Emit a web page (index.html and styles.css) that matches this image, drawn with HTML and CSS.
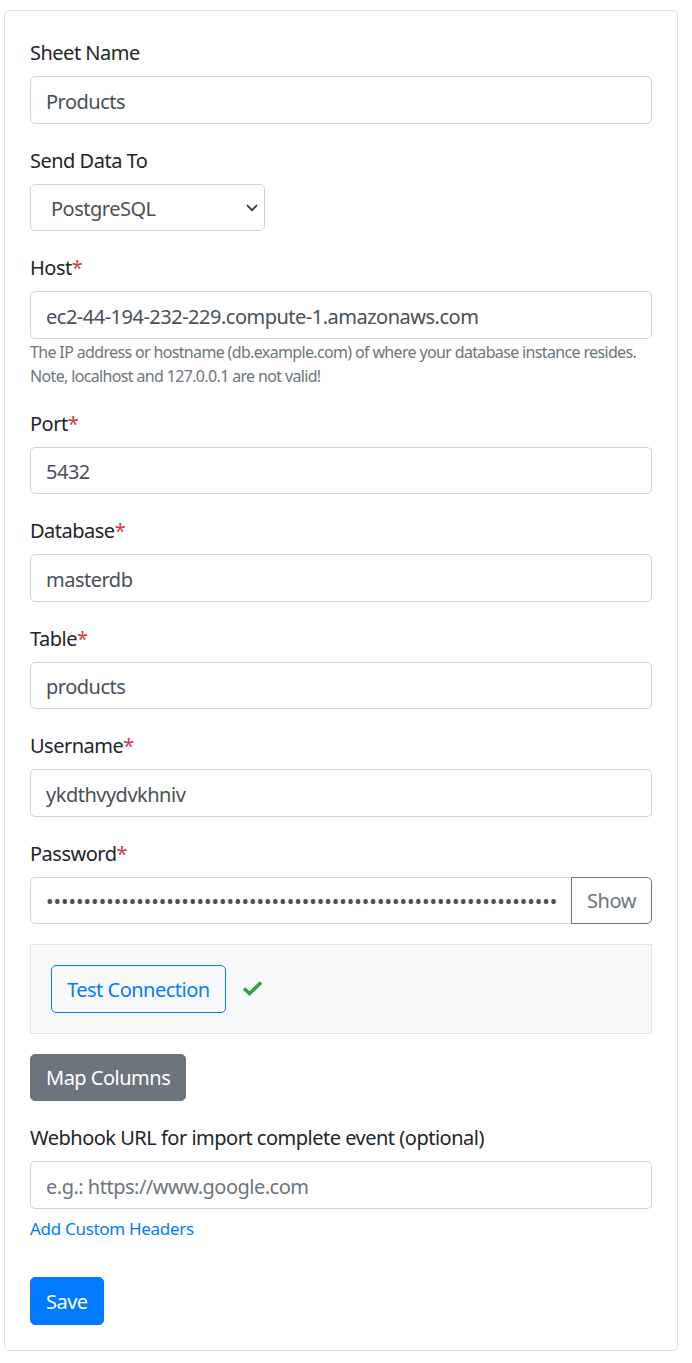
FILE: index.html
```html
<!DOCTYPE html>
<html lang="en">
<head>
<meta charset="utf-8">
<title>Sheet settings</title>
<link rel="stylesheet" href="styles.css">
</head>
<body>
<div class="card">
  <form class="card-body">
    <div class="form-group">
      <label class="label">Sheet Name</label>
      <input class="form-control" type="text" value="Products">
    </div>
    <div class="form-group">
      <label class="label">Send Data To</label>
      <div class="select-wrap">
        <select class="form-select">
          <option>PostgreSQL</option>
        </select>
        <svg class="chevron" width="12" height="8" viewBox="0 0 12 8"><path d="M1 1.2 L6 6.2 L11 1.2" fill="none" stroke="#343a40" stroke-width="1.8"/></svg>
      </div>
    </div>
    <div class="form-group">
      <label class="label">Host<span class="req">*</span></label>
      <input class="form-control" type="text" value="ec2-44-194-232-229.compute-1.amazonaws.com">
      <div class="help">The IP address or hostname (db.example.com) of where your database instance resides. Note, localhost and 127.0.0.1 are not valid!</div>
    </div>
    <div class="form-group">
      <label class="label">Port<span class="req">*</span></label>
      <input class="form-control" type="text" value="5432">
    </div>
    <div class="form-group">
      <label class="label">Database<span class="req">*</span></label>
      <input class="form-control" type="text" value="masterdb">
    </div>
    <div class="form-group">
      <label class="label">Table<span class="req">*</span></label>
      <input class="form-control" type="text" value="products">
    </div>
    <div class="form-group">
      <label class="label">Username<span class="req">*</span></label>
      <input class="form-control" type="text" value="ykdthvydvkhniv">
    </div>
    <div class="form-group">
      <label class="label">Password<span class="req">*</span></label>
      <div class="input-group">
        <input class="form-control grouped" type="password" value="aaaaaaaaaaaaaaaaaaaaaaaaaaaaaaaaaaaaaaaaaaaaaaaaaaaaaaaaaaaaaaaaaaaaaaaaa">
        <button type="button" class="btn btn-outline-secondary append">Show</button>
      </div>
    </div>
    <div class="test-box">
      <button type="button" class="btn btn-outline-primary">Test Connection</button>
      <svg class="check" width="21" height="16" viewBox="0 0 21 16"><path d="M2 8.5 L7.5 13.5 L19 2.5" fill="none" stroke="#28a745" stroke-width="3.6" stroke-linecap="butt" stroke-linejoin="miter"/></svg>
    </div>
    <div class="form-group">
      <button type="button" class="btn btn-secondary">Map Columns</button>
    </div>
    <div class="form-group">
      <label class="label">Webhook URL for import complete event (optional)</label>
      <input class="form-control" type="text" placeholder="e.g.: https://www.google.com">
      <a class="link" href="#">Add Custom Headers</a>
    </div>
    <button type="button" class="btn btn-primary save">Save</button>
  </form>
</div>
</body>
</html>
```

FILE: styles.css
```css
* { box-sizing: border-box; }
html, body { margin: 0; padding: 0; background: #fff; }
body {
  font-family: "Noto Sans", "Open Sans", "Liberation Sans", sans-serif;
  font-size: 20px;
  line-height: 30px;
  color: #212529;
  padding: 10px 14px 12px 4px;
}
.card {
  border: 1px solid #dfdfdf;
  border-radius: 5px;
  background: #fff;
}
.card-body {
  display: block;
  margin: 0;
  padding: 25px;
}
.form-group { margin-bottom: 20px; }
.label {
  display: block;
  padding-top: 2px;
  margin-bottom: 8px;
  line-height: 30px;
  letter-spacing: -0.5px;
}
.req { color: #dc3545; }
.form-control {
  display: block;
  width: 100%;
  height: 47.5px;
  padding: 9px 15px 6px;
  font: inherit;
  line-height: 30px;
  color: #495057;
  background: #fff;
  border: 1px solid #ced4da;
  border-radius: 5px;
  letter-spacing: -0.5px;
  outline: none;
}
.form-control::placeholder { color: #6c757d; opacity: 1; }
.select-wrap {
  position: relative;
  width: 235px;
}
.form-select {
  display: block;
  width: 235px;
  height: 47.5px;
  padding: 9px 40px 6px 20px;
  font: inherit;
  letter-spacing: -0.5px;
  color: #495057;
  background: #fff;
  border: 1px solid #ced4da;
  border-radius: 5px;
  appearance: none;
  -webkit-appearance: none;
  outline: none;
}
.chevron {
  position: absolute;
  right: 7px;
  top: 20px;
  pointer-events: none;
}
.help {
  font-size: 16px;
  line-height: 24px;
  padding-top: 1px;
  margin-bottom: -1px;
  color: #6c757d;
  letter-spacing: -0.65px;
}
.input-group {
  display: flex;
}
.form-control.grouped {
  flex: 1;
  border-top-right-radius: 0;
  border-bottom-right-radius: 0;
  letter-spacing: 0;
}
.btn {
  display: inline-block;
  height: 47.5px;
  padding: 8px 15px 6px;
  font: inherit;
  line-height: 30px;
  letter-spacing: -0.5px;
  border: 1px solid transparent;
  border-radius: 5px;
  cursor: pointer;
  background: transparent;
}
.btn-outline-secondary {
  color: #6c757d;
  border-color: #6c757d;
}
.append {
  width: 81px;
  margin-left: -1px;
  border-top-left-radius: 0;
  border-bottom-left-radius: 0;
}
.btn-outline-primary {
  color: #007bff;
  border-color: #007bff;
}
.btn-secondary {
  color: #fff;
  background: #6c757d;
  border-color: #6c757d;
}
.btn-primary {
  color: #fff;
  background: #007bff;
  border-color: #007bff;
}
.test-box {
  display: flex;
  align-items: center;
  gap: 16px;
  padding: 20px;
  margin-bottom: 20px;
  background: #f8f9fa;
  border: 1px solid #e3e5e8;
}
.check { display: block; margin-top: -2px; }
.link {
  display: block;
  margin-top: 8px;
  font-size: 17px;
  line-height: 24px;
  color: #007bff;
  text-decoration: none;
  letter-spacing: -0.3px;
}
.save { margin-top: 36px; display: block; height: 48px; }
```
